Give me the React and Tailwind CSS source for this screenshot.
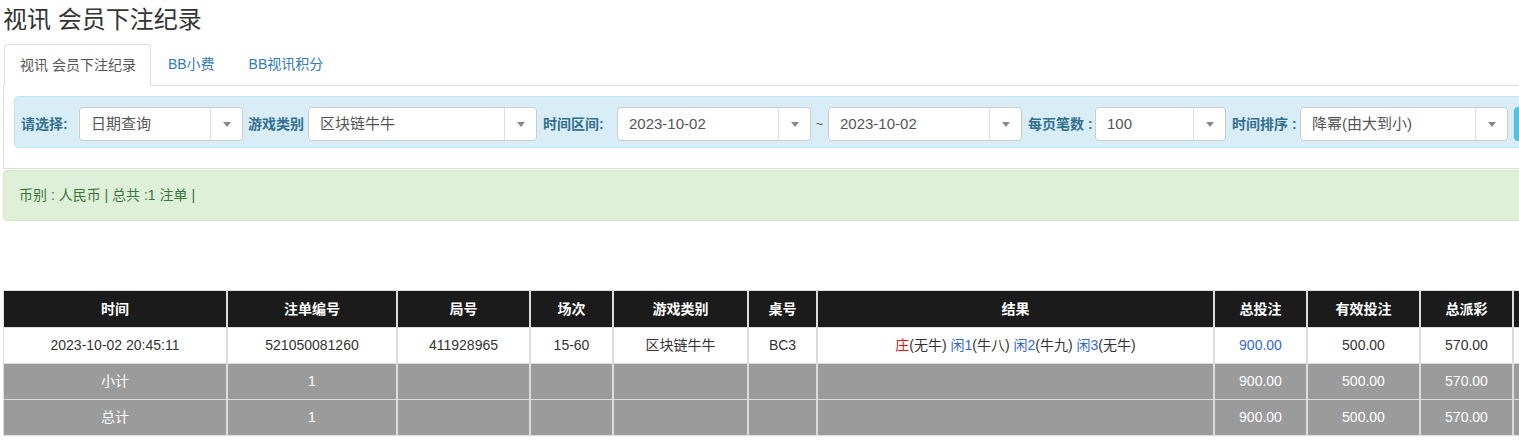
import React from 'react';

const cols = [
  { key: 'time', label: '时间', w: 'w-[222px]' },
  { key: 'no', label: '注单编号', w: 'w-[168px]' },
  { key: 'round', label: '局号', w: 'w-[131px]' },
  { key: 'seq', label: '场次', w: 'w-[81px]' },
  { key: 'game', label: '游戏类别', w: 'w-[133px]' },
  { key: 'table', label: '桌号', w: 'w-[67px]' },
  { key: 'result', label: '结果', w: 'w-[395px]' },
  { key: 'bet', label: '总投注', w: 'w-[91px]' },
  { key: 'valid', label: '有效投注', w: 'w-[111px]' },
  { key: 'payout', label: '总派彩', w: 'w-[91px]' },
  { key: 'more', label: '', w: 'w-[100px]' },
];

function FakeSelect({ value, width }) {
  return (
    <div className={`${width} h-[34px] flex items-stretch bg-white border border-[#ccc] rounded-[4px] shrink-0`}>
      <div className="flex-1 flex items-center pl-[11px] text-[15px] text-[#555] whitespace-nowrap overflow-hidden">
        {value}
      </div>
      <div className="w-[32px] border-l border-[#ddd] flex items-center justify-center">
        <span className="w-0 h-0 border-x-[4px] border-t-[5px] border-x-transparent border-t-[#888]" />
      </div>
    </div>
  );
}

function Label({ children, width, ml }) {
  return (
    <div className={`${width} ${ml} shrink-0 text-[14px] font-bold text-[#31708f] whitespace-nowrap`}>
      {children}
    </div>
  );
}

function Row({ cells, tone }) {
  const bg =
    tone === 'head'
      ? 'bg-[#1b1b1b] text-white font-bold h-[36px]'
      : tone === 'sum'
      ? 'bg-[#9b9b9b] text-white h-[35px]'
      : 'bg-white text-[#333] h-[35px]';
  return (
    <div className="flex gap-x-[2px]">
      {cols.map((c, i) => (
        <div key={c.key} className={`${c.w} ${bg} shrink-0 flex items-center justify-center whitespace-nowrap`}>
          {cells[i]}
        </div>
      ))}
    </div>
  );
}

export default function App() {
  const result = (
    <span>
      <span className="text-[#e3161b]">庄</span>(无牛) <span className="text-[#2f68d6]">闲1</span>(牛八){' '}
      <span className="text-[#2f68d6]">闲2</span>(牛九) <span className="text-[#2f68d6]">闲3</span>(无牛)
    </span>
  );

  return (
    <div className="w-full overflow-hidden bg-white font-['Liberation_Sans','Noto_Sans_CJK_SC',sans-serif] text-[14px] text-[#333]">
      <div className="w-[1760px] pl-[3px]">
        {/* Title */}
        <h3 className="text-[24px] leading-[40px] font-normal text-[#333]">视讯 会员下注纪录</h3>

        {/* Tabs */}
        <div className="mt-[4px] flex border-b border-[#ddd] h-[42px]">
          <div className="ml-[1px] pl-[15px] pr-[14px] py-[10px] leading-[20px] text-[#555] bg-white border border-[#ddd] border-b-transparent rounded-t-[4px] -mb-[1px] h-[42px]">
            视讯 会员下注纪录
          </div>
          <div className="ml-[2px] px-[15px] py-[10px] leading-[20px] text-[#337ab7]">BB小费</div>
          <div className="ml-[4px] px-[15px] py-[10px] leading-[20px] text-[#337ab7]">BB视讯积分</div>
        </div>

        {/* Filter panel */}
        <div className="border-x border-b border-[#ddd] pt-[10px] pb-[20px] px-[10px]">
          <div className="bg-[#d9edf7] border border-[#bce8f1] rounded-[4px] pt-[10px] pb-[6px] flex items-center">
            <Label width="w-[58px]" ml="ml-[6px]">请选择:</Label>
            <FakeSelect value="日期查询" width="w-[164px]" />
            <Label width="w-[60px]" ml="ml-[5px]">游戏类别</Label>
            <FakeSelect value="区块链牛牛" width="w-[229px]" />
            <Label width="w-[74px]" ml="ml-[6px]">时间区间:</Label>
            <FakeSelect value="2023-10-02" width="w-[194px]" />
            <div className="w-[17px] shrink-0 text-center text-[#555] text-[13px]">~</div>
            <FakeSelect value="2023-10-02" width="w-[194px]" />
            <Label width="w-[67px]" ml="ml-[6px]">每页笔数 :</Label>
            <FakeSelect value="100" width="w-[131px]" />
            <Label width="w-[68px]" ml="ml-[6px]">时间排序 :</Label>
            <FakeSelect value="降幂(由大到小)" width="w-[208px]" />
            <div className="ml-[6px] h-[34px] w-[60px] rounded-[4px] bg-[#5bc0de] border border-[#46b8da] shrink-0" />
          </div>
        </div>

        {/* Alert */}
        <div className="mt-[1px] bg-[#dff0d8] border border-[#d6e9c6] rounded-[4px] px-[15px] py-[15px] leading-[19px] text-[#3c763d]">
          币别 : 人民币 | 总共 :1 注单 |
        </div>

        {/* Table */}
        <div className="mt-[69px] inline-flex flex-col gap-y-[1px] bg-[#dcdcdc] p-[1px]">
          <Row tone="head" cells={cols.map((c) => c.label)} />
          <Row
            tone="data"
            cells={[
              '2023-10-02 20:45:11',
              '521050081260',
              '411928965',
              '15-60',
              '区块链牛牛',
              'BC3',
              result,
              <span className="text-[#2f68d6]">900.00</span>,
              '500.00',
              '570.00',
              '',
            ]}
          />
          <Row tone="sum" cells={['小计', '1', '', '', '', '', '', '900.00', '500.00', '570.00', '']} />
          <Row tone="sum" cells={['总计', '1', '', '', '', '', '', '900.00', '500.00', '570.00', '']} />
        </div>
      </div>
    </div>
  );
}
